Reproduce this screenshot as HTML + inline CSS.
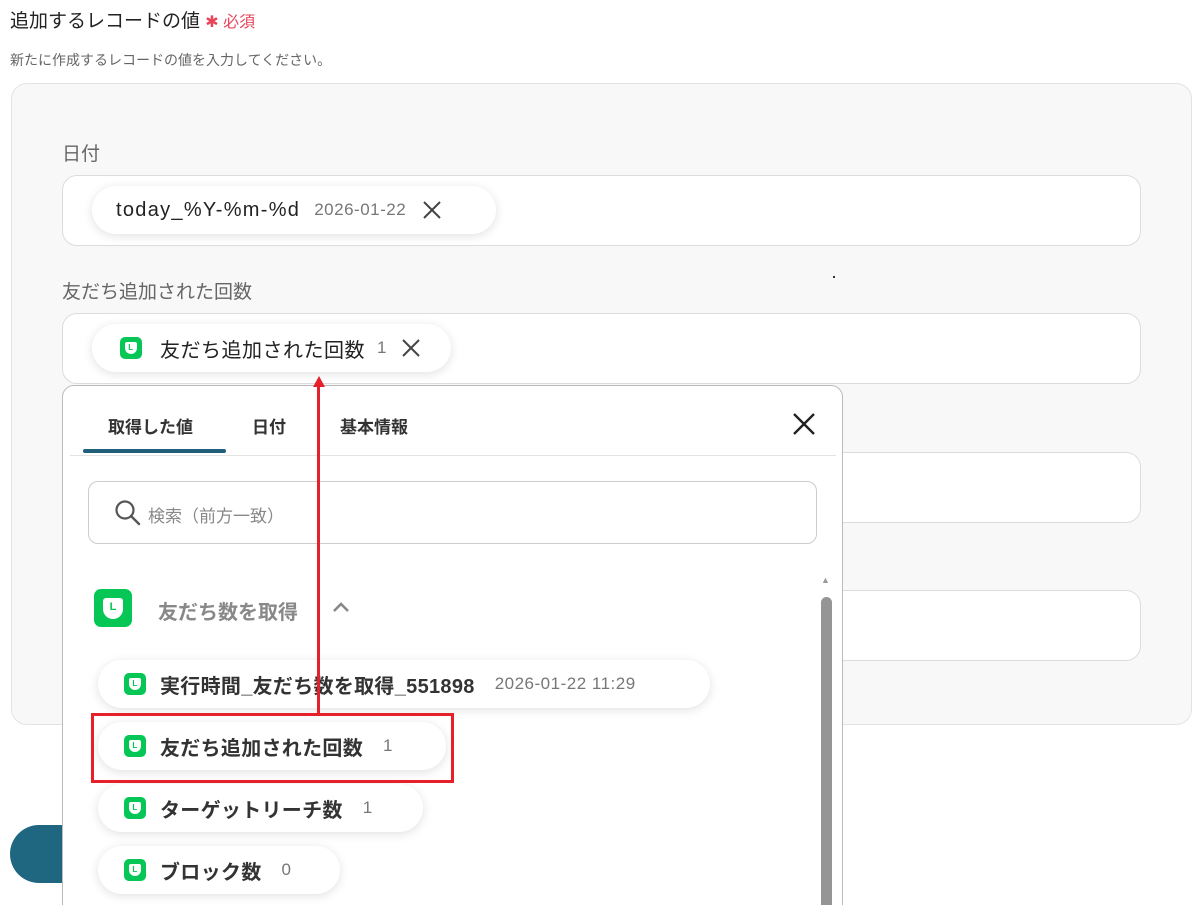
<!DOCTYPE html>
<html><head><meta charset="utf-8"><style>
*{box-sizing:border-box;margin:0;padding:0}
html,body{width:1201px;height:905px;overflow:hidden}
body{background:#fff;font-family:"Liberation Sans","Noto Sans CJK JP",sans-serif;position:relative;color:#222}
.abs{position:absolute}
.title{left:10px;top:6px;font-size:19px;color:#222}
.req{color:#e8455a;font-size:16px}
.sub{left:10px;top:50px;font-size:14px;color:#666}
.panel{left:11px;top:83px;width:1181px;height:642px;background:#f8f8f9;border:1px solid #e3e3e6;border-radius:16px}
.lbl{left:62px;font-size:19px;color:#666}
.inp{left:62px;width:1079px;height:71px;background:#fff;border:1px solid #dcdce0;border-radius:15px}
.chip{background:#fff;border-radius:25px;box-shadow:0 2px 10px rgba(0,0,0,.12);display:flex;align-items:center;height:48px;white-space:nowrap}
.ico{width:22px;height:22px;background:#06c755;border-radius:5px;display:inline-flex;align-items:center;justify-content:center;flex:none}
.ico i{width:12px;height:12px;background:#fff;border-radius:2px 2px 6px 6px;font-style:normal;font-size:8px;color:#06c755;font-weight:bold;line-height:12px;text-align:center}
.val{color:#777;font-size:17px;font-weight:normal;letter-spacing:.5px}
.pop{left:62px;top:385px;width:781px;height:560px;background:#fff;border:1px solid #bbb;border-radius:12px}
.tab{top:413px;font-size:17px;font-weight:bold;color:#333}
.it{left:98px;font-size:20px;font-weight:bold;color:#333;padding:0 26px;letter-spacing:.3px}
.it .ico{margin-right:14px}
</style></head><body>
<div class="abs title">追加するレコードの値 <span class="req">✱ 必須</span></div>
<div class="abs sub">新たに作成するレコードの値を入力してください。</div>
<div class="abs panel"></div>
<div class="abs lbl" style="top:139px">日付</div>
<div class="abs inp" style="top:175px"></div>
<div class="abs chip" style="left:92px;top:186px;width:404px;padding:0 0 0 24px;font-size:20px;color:#222;letter-spacing:1.3px">today_%Y-%m-%d<span class="val" style="margin-left:14px">2026-01-22</span><svg style="margin-left:16px" width="20" height="20"><path d="M2 2L18 18M18 2L2 18" stroke="#444" stroke-width="2"/></svg></div>
<div class="abs lbl" style="top:277px">友だち追加された回数</div>
<div class="abs inp" style="top:313px"></div>
<div class="abs chip" style="left:92px;top:324px;width:359px;padding:0 0 0 28px;font-size:20px;color:#222;letter-spacing:.5px"><span class="ico" style="margin-right:18px"><i>L</i></span>友だち追加された回数<span class="val" style="margin-left:12px">1</span><svg style="margin-left:14px" width="20" height="20"><path d="M2 2L18 18M18 2L2 18" stroke="#444" stroke-width="2"/></svg></div>
<div class="abs inp" style="top:452px"></div>
<div class="abs inp" style="top:590px"></div>
<div class="abs" style="left:833px;top:276px;width:2px;height:2px;background:#333"></div>
<div class="abs" style="left:10px;top:825px;width:120px;height:58px;background:#1f6680;border-radius:29px"></div>
<div class="abs pop"></div>
<div class="abs tab" style="left:108px">取得した値</div>
<div class="abs tab" style="left:252px">日付</div>
<div class="abs tab" style="left:340px">基本情報</div>
<div class="abs" style="left:83px;top:449px;width:143px;height:4px;background:#1f5f7a;border-radius:2px"></div>
<div class="abs" style="left:70px;top:455px;width:766px;height:1px;background:#e3e3e3"></div>
<svg class="abs" style="left:792px;top:412px" width="24" height="24"><path d="M2 2L22 22M22 2L2 22" stroke="#222" stroke-width="2.4"/></svg>
<div class="abs" style="left:88px;top:481px;width:729px;height:63px;border:1px solid #ccc;border-radius:10px"></div>
<svg class="abs" style="left:114px;top:499px" width="28" height="28"><circle cx="11" cy="11" r="8.5" fill="none" stroke="#555" stroke-width="2.2"/><line x1="17" y1="17" x2="25" y2="25" stroke="#555" stroke-width="2.4" stroke-linecap="round"/></svg>
<div class="abs" style="left:148px;top:502px;font-size:17px;color:#888">検索（前方一致）</div>
<div class="abs" style="left:94px;top:589px;width:38px;height:38px;background:#06c755;border-radius:7px;display:flex;align-items:center;justify-content:center"><div style="width:20px;height:21px;background:#fff;border-radius:3px 3px 10px 10px;color:#06c755;font-size:11px;font-weight:bold;text-align:center;line-height:18px">L</div></div>
<div class="abs" style="left:158px;top:596px;font-size:20px;font-weight:bold;color:#888">友だち数を取得</div>
<svg class="abs" style="left:331px;top:600px" width="20" height="14"><polyline points="3,11 10,4 17,11" fill="none" stroke="#888" stroke-width="2.6"/></svg>
<div class="abs" style="left:821px;top:575px;font-size:9px;color:#999">▲</div>
<div class="abs" style="left:821px;top:597px;width:11px;height:320px;background:#959595;border-radius:6px"></div>
<div class="abs chip it" style="top:660px;width:612px"><span class="ico"><i>L</i></span>実行時間_友だち数を取得_551898<span class="val" style="margin-left:20px">2026-01-22 11:29</span></div>
<div class="abs chip it" style="top:722px;width:348px"><span class="ico"><i>L</i></span>友だち追加された回数<span class="val" style="margin-left:20px">1</span></div>
<div class="abs chip it" style="top:784px;width:325px"><span class="ico"><i>L</i></span>ターゲットリーチ数<span class="val" style="margin-left:20px">1</span></div>
<div class="abs chip it" style="top:846px;width:242px"><span class="ico"><i>L</i></span>ブロック数<span class="val" style="margin-left:20px">0</span></div>
<div class="abs" style="left:317px;top:385px;width:3px;height:330px;background:#e5202a"></div>
<svg class="abs" style="left:311px;top:374px" width="16" height="14"><polygon points="8,2 14,13 2,13" fill="#e5202a"/></svg>
<div class="abs" style="left:91px;top:713px;width:363px;height:70px;border:3px solid #e5202a"></div>
</body></html>
